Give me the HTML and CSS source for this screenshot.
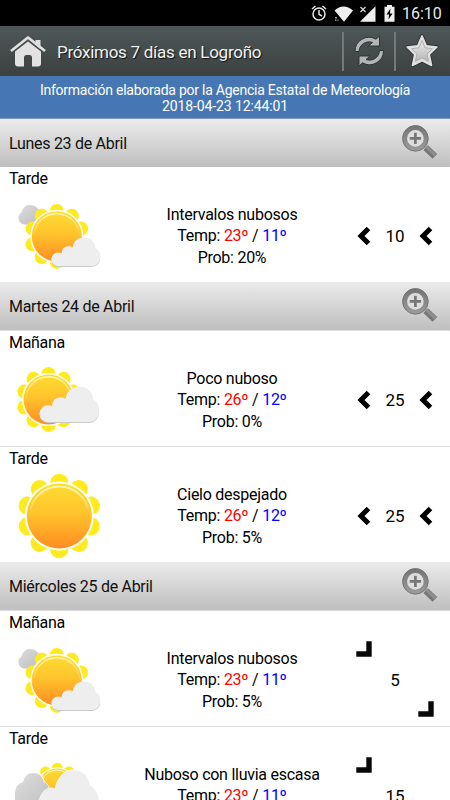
FILE: index.html
```html
<!DOCTYPE html>
<html lang="es">
<head>
<meta charset="utf-8">
<title>Próximos 7 días en Logroño</title>
<link rel="stylesheet" href="styles.css">
</head>
<body>
<svg class="defs" aria-hidden="true">
  <defs>
    <linearGradient id="sunFill" x1="0" y1="0" x2="0" y2="1"><stop offset="0" stop-color="#fddd32"/><stop offset=".45" stop-color="#ffc42c"/><stop offset="1" stop-color="#ff8c22"/></linearGradient>
    <linearGradient id="shine" x1="0" y1="0" x2="0" y2="1"><stop offset="0" stop-color="#fff6b0"/><stop offset=".5" stop-color="#fff6b0" stop-opacity="0"/></linearGradient>
    <linearGradient id="greyFill" x1="0" y1="0" x2="1" y2="1"><stop offset="0" stop-color="#dedede"/><stop offset="1" stop-color="#bdbdbd"/></linearGradient>
    <linearGradient id="metal" x1="0" y1="0" x2="0" y2="1"><stop offset="0" stop-color="#ececec"/><stop offset="1" stop-color="#b5b5b5"/></linearGradient>
    <linearGradient id="lens" x1="0" y1="0" x2="0" y2="1"><stop offset="0" stop-color="#777"/><stop offset="1" stop-color="#999"/></linearGradient>
    <g id="sun">
      <g fill="#ffea20">
        <circle cy="-33" r="9.2"/><circle cy="-33" r="9.2" transform="rotate(36)"/><circle cy="-33" r="9.2" transform="rotate(72)"/><circle cy="-33" r="9.2" transform="rotate(108)"/><circle cy="-33" r="9.2" transform="rotate(144)"/><circle cy="-33" r="9.2" transform="rotate(180)"/><circle cy="-33" r="9.2" transform="rotate(216)"/><circle cy="-33" r="9.2" transform="rotate(252)"/><circle cy="-33" r="9.2" transform="rotate(288)"/><circle cy="-33" r="9.2" transform="rotate(324)"/>
      </g>
      <circle r="34.5" fill="#fffef0"/>
      <circle r="32.5" fill="url(#sunFill)"/>
      <circle r="29.5" fill="none" stroke="url(#shine)" stroke-width="1.8"/>
    </g>
    <path id="cloud" d="M8 36A8.5 8.5 0 0 1 8 19Q10 19 12 20Q12 11 21 11Q24 11 25.500 12.500C27 4 32 0 39 0C47 0 52 5 53 13C57 15 59 19 59 25C59 31 55 36 49 36Z"/>
    <symbol id="zoom" viewBox="0 0 36 36">
      <path d="M24 23l9 8.500" stroke="#777" stroke-width="6.500"/>
      <path d="M24.500 22l9 8.500" stroke="#8e8e8e" stroke-width="3"/>
      <circle cx="14" cy="14" r="10.400" fill="#dedede" stroke="url(#lens)" stroke-width="4.600"/>
      <circle cx="14" cy="14" r="12.400" fill="none" stroke="#707070" stroke-width=".8"/>
      <path d="M14 8.500v11M8.500 14h11" stroke="#777" stroke-width="2.700"/>
    </symbol>
    <symbol id="west" viewBox="0 0 16 20"><path d="M12.500 2.500L5 10l7.500 7.500" fill="none" stroke="#000" stroke-width="5"/></symbol>
    <symbol id="corner" viewBox="0 0 16 16"><path d="M10.300 .3h5.400v15.400h-15.400v-5.400h10z" fill="#080808"/></symbol>
    <symbol id="intervals" viewBox="0 0 90 86">
      <path d="M10 31.500A6.500 6.500 0 0 1 6.500 19.500C7.500 14.500 11 12 15 12C20 12 23 15 24 18V31.500Z" fill="url(#greyFill)"/>
      <use href="#sun" transform="translate(41.800 43.400) scale(.77)"/>
      <use href="#cloud" fill="#c9c9c9" transform="translate(36.800 45.100) scale(.82 .8)"/>
      <use href="#cloud" fill="#eeeeee" transform="translate(36.800 44.500) scale(.82 .79)"/>
    </symbol>
    <symbol id="few" viewBox="0 0 90 86">
      <use href="#sun" transform="translate(33.600 42.500) scale(.77)"/>
      <use href="#cloud" fill="#c9c9c9" transform="translate(25 30)"/>
      <use href="#cloud" fill="#eeeeee" transform="translate(25 29.700) scale(1 .98)"/>
    </symbol>
    <symbol id="clear" viewBox="0 0 90 86"><use href="#sun" transform="translate(44.300 43)"/></symbol>
    <symbol id="rain" viewBox="0 0 90 86">
      <use href="#sun" transform="translate(42.300 35) scale(.6)"/>
      <path d="M0 60V40Q0 30 8 28C10 22 13 19 18 19C24 19 28 22 30 29Q34 31 35 37V60Z" fill="#fff"/>
      <path d="M0 60V39Q1 31 8 29C10 23 13 20 18 20C24 20 27 23 29 29Q34 31 34 37V60Z" fill="url(#greyFill)"/>
      <path d="M22 60Q23 44 29 38Q34 33 40 36C42 25 49 17 58 17C67 17 73 22 75 32Q82 36 84 46V60Z" fill="#eeeeee" stroke="#fff" stroke-width=".6"/>
    </symbol>
  </defs>
</svg>
<div class="screen">
  <div class="status">
    <svg width="16" height="18" viewBox="0 0 16 18"><g fill="none" stroke="#e8e8e8" stroke-width="1.500"><circle cx="8" cy="10" r="6"/><path d="M8 6v4.300l3 1.700M1 5l3.500-3M15 5l-3.500-3"/></g></svg>
    <svg class="wifi" width="19" height="16" viewBox="0 0 19 16"><path d="M.5 4.500Q9.500-3.500 19 4.500L10 15.800Z" fill="#eee"/><path d="M1 11h2v1.500h-2zM1 13.500h1.500v1.500h-1.500zM3.500 13.500h1v1.500h-1z" fill="#999"/></svg>
    <svg class="signal" width="17" height="16" viewBox="0 0 17 16"><path d="M16.500 .3v15.400h-15.500z" fill="#eee"/><path d="M0 0h8v7h-8z" fill="#000"/><path d="M1.500 1l5 5M6.500 1l-5 5" stroke="#ddd" stroke-width="1.200"/></svg>
    <svg class="battery" width="11" height="17" viewBox="0 0 11 17"><path d="M3 0h5v1.700h2.500v15h-10v-15H3z" fill="#eee"/><path d="M6.500 3.500L2.500 9.500h2.600L4.500 14.500L8.500 8.500H5.900z" fill="#000"/></svg>
    <span class="clock">16:10</span>
  </div>
  <header class="bar">
    <svg class="home" width="36" height="32" viewBox="0 0 36 32"><path d="M1 15L18 1.500L35 15" fill="none" stroke="#e2e2e2" stroke-width="2.600" stroke-linejoin="round"/><path d="M25.500 4h5v9l-5-4z" fill="#dedede"/><path d="M5 15.500L18 5.500L31 15.500V27.500Q31 30.500 28 30.500H22V21.500Q22 19 19.500 19H16.500Q14 19 14 21.500V30.500H8Q5 30.500 5 27.500Z" fill="#e2e2e2"/></svg>
    <h1>Próximos 7 días en Logroño</h1>
    <div class="action"><svg width="34" height="34" viewBox="0 0 34 34"><g stroke="#2f3535" stroke-width="1" fill="#b4b6b6"><path d="M3 17.500A14 14 0 0 1 24 5.200L27.500 2V12H16.500L20.500 8.500A10 10 0 0 0 7 17.500Z"/><path d="M31.500 16.500A14 14 0 0 1 10.500 28.800L7 32V22H18L14 25.500A10 10 0 0 0 27.500 16.500Z"/></g></svg></div>
    <div class="action star"><svg width="34" height="34" viewBox="0 0 34 34"><path d="M17 1.800L21.400 11.700L32 12.900L24.300 20.400L26.600 31.500L17 26.800L7.400 31.500L9.700 20.400L2 12.900L12.600 11.700Z" fill="#dedede" stroke="#2d3333" stroke-width="3.400" stroke-linejoin="round"/><path d="M17 1.800L21.400 11.700L32 12.900L24.300 20.400L26.600 31.500L17 26.800L7.400 31.500L9.700 20.400L2 12.900L12.600 11.700Z" fill="#e0e0e0" stroke="#e0e0e0" stroke-width="1.500" stroke-linejoin="round"/><path d="M17 6.500L20 13.800L27.500 14.700L22 20L23.700 27.500L17 24L10.300 27.500L12 20L6.500 14.700L14 13.800Z" fill="url(#metal)" stroke="#b0b0b0" stroke-width="1"/></svg></div>
  </header>
  <div class="banner">Información elaborada por la Agencia Estatal de Meteorología<br><span class="stamp">2018-04-23 12:44:01</span></div>

  <h2 class="day">Lunes 23 de Abril<svg class="lens"><use href="#zoom"/></svg></h2>
  <section class="row first">
    <div class="period">Tarde</div><svg class="weather"><use href="#intervals"/></svg>
    <div class="info"><div>Intervalos nubosos</div><div>Temp: <b class="max">23º</b> / <b class="min">11º</b></div><div>Prob: 20%</div></div>
    <div class="wind"><svg class="west"><use href="#west"/></svg><span>10</span><svg class="west"><use href="#west"/></svg></div>
  </section>

  <h2 class="day">Martes 24 de Abril<svg class="lens"><use href="#zoom"/></svg></h2>
  <section class="row">
    <div class="period">Mañana</div><svg class="weather"><use href="#few"/></svg>
    <div class="info"><div>Poco nuboso</div><div>Temp: <b class="max">26º</b> / <b class="min">12º</b></div><div>Prob: 0%</div></div>
    <div class="wind"><svg class="west"><use href="#west"/></svg><span>25</span><svg class="west"><use href="#west"/></svg></div>
  </section>
  <section class="row">
    <div class="period">Tarde</div><svg class="weather"><use href="#clear"/></svg>
    <div class="info"><div>Cielo despejado</div><div>Temp: <b class="max">26º</b> / <b class="min">12º</b></div><div>Prob: 5%</div></div>
    <div class="wind"><svg class="west"><use href="#west"/></svg><span>25</span><svg class="west"><use href="#west"/></svg></div>
  </section>

  <h2 class="day">Miércoles 25 de Abril<svg class="lens"><use href="#zoom"/></svg></h2>
  <section class="row">
    <div class="period">Mañana</div><svg class="weather"><use href="#intervals"/></svg>
    <div class="info"><div>Intervalos nubosos</div><div>Temp: <b class="max">23º</b> / <b class="min">11º</b></div><div>Prob: 5%</div></div>
    <div class="wind"><svg class="corner"><use href="#corner"/></svg><span>5</span><svg class="corner end"><use href="#corner"/></svg></div>
  </section>
  <section class="row">
    <div class="period">Tarde</div><svg class="weather"><use href="#rain"/></svg>
    <div class="info"><div>Nuboso con lluvia escasa</div><div>Temp: <b class="max">23º</b> / <b class="min">11º</b></div></div>
    <div class="wind"><svg class="corner"><use href="#corner"/></svg><span>15</span><svg class="corner end"><use href="#corner"/></svg></div>
  </section>
</div>
</body>
</html>
```
FILE: styles.css
```css
* { box-sizing: border-box; }
html, body { margin: 0; height: 800px; overflow: hidden; }
body { font-family: Roboto, sans-serif; font-size: 16px; color: #000; background: #fff; }
svg { display: block; flex: none; }
.defs { position: absolute; width: 0; height: 0; }
.screen { width: 450px; height: 800px; overflow: hidden; }

.status { height: 26px; background: #000; display: flex; align-items: center; padding-left: 311px; color: #e8e8e8; }
.wifi { margin-left: 7px; margin-top: 1px; }
.signal { margin-left: 6px; margin-top: 1px; }
.battery { margin-left: 8px; }
.clock { margin-left: 7px; line-height: 26px; padding-top: 2px; }

.bar { height: 50px; display: flex; align-items: center; padding-left: 10px; background: linear-gradient(#4f5758, #3c4140); }
.home { margin-top: 1px; }
.bar h1 { width: 296px; margin: 0; padding-left: 11px; font-size: 17px; letter-spacing: -.27px; font-weight: 400; color: #f2f2f2; white-space: nowrap; text-shadow: 1px 1px 1px #111; line-height: 50px; padding-top: 2px; }
.action { width: 52px; height: 39px; border-left: 2px solid #747979; display: flex; align-items: center; justify-content: center; }
.star { width: 54px; }
.star svg { overflow: visible; }

.banner { height: 43px; background: #4677b4; border-bottom: 1px solid #8099c6; color: #fff; text-align: center; font-size: 14px; letter-spacing: -.24px; line-height: 16px; padding-top: 6px; white-space: nowrap; }
.stamp { letter-spacing: -.1px; }

.day { margin: 0; height: 48px; padding: 1px 12px 0 9px; display: flex; align-items: center; justify-content: space-between; font-size: 16px; letter-spacing: -.29px; font-weight: 400; color: #111; background: linear-gradient(#ebebeb, #bfbfbf); }
.lens { width: 37px; height: 37px; }
.day .lens { margin-bottom: 2px; }

.row { height: 116px; border-top: 1px solid #dcdcdc; display: grid; grid-template-columns: 117px 230px 103px; grid-template-rows: 26px 89px; }
.row.first { height: 115px; border-top: 0; }
.period { grid-area: 1 / 1; padding-left: 9px; line-height: 23px; letter-spacing: -.3px; }
.weather { grid-area: 2 / 1; width: 90px; height: 86px; margin-left: 15px; }
.info { grid-area: 1 / 2 / 3 / 3; padding-top: 37px; text-align: center; line-height: 21.3px; letter-spacing: -.26px; white-space: nowrap; }
.info b { font-weight: 400; }
.max { color: #f00; }
.min { color: #00f; }
.wind { grid-area: 1 / 3 / 3 / 4; height: 76px; margin: 30px 16px 0 9px; display: flex; align-items: center; justify-content: space-between; font-size: 17px; }
.west { width: 16px; height: 20px; margin-top: 1px; }
.wind span { padding-top: 1px; }
.corner { width: 16px; height: 16px; align-self: flex-start; }
.corner.end { align-self: flex-end; }
```
